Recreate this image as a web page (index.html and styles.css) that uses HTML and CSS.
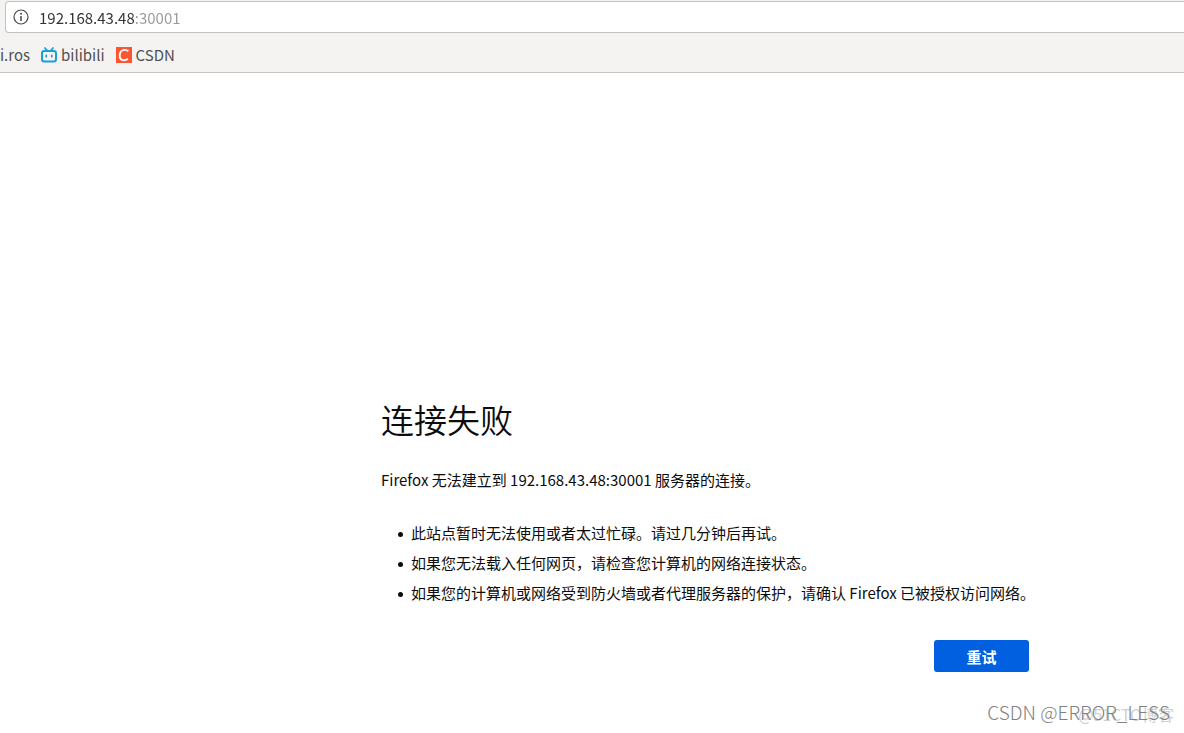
FILE: index.html
```html
<!DOCTYPE html>
<html lang="zh-CN">
<head>
<meta charset="utf-8">
<title>连接失败</title>
<link rel="stylesheet" href="styles.css">
</head>
<body>
<header class="toolbar">
  <div class="urlbar">
    <svg class="info-icon" viewBox="0 0 16 16" aria-hidden="true">
      <circle cx="8" cy="8" r="7" fill="none" stroke="#4a4a4a" stroke-width="1.2"/>
      <circle cx="8" cy="4.8" r="1" fill="#4a4a4a"/>
      <path d="M8 7v5" stroke="#4a4a4a" stroke-width="1.5"/>
    </svg>
    <input class="address" type="text" value="192.168.43.48:30001" aria-label="地址" spellcheck="false">
  </div>
  <nav class="bookmarks">
    <a class="bookmark clipped" href="#"><span>ki.ros</span></a>
    <a class="bookmark" href="#">
      <svg class="site-icon" viewBox="0 0 16 16" aria-hidden="true">
        <path d="M4 1l2.200 2.600M12 1L9.800 3.600" stroke="#18a0d8" stroke-width="1.700" stroke-linecap="round"/>
        <rect x="1" y="4" width="14" height="10.500" rx="2.300" fill="none" stroke="#18a0d8" stroke-width="2"/>
        <path d="M5.200 8.300v1.400M10.800 8.300v1.400" stroke="#18a0d8" stroke-width="1.700" stroke-linecap="round"/>
      </svg>
      <span>bilibili</span>
    </a>
    <a class="bookmark" href="#">
      <svg class="site-icon" viewBox="0 0 16 16" aria-hidden="true">
        <rect width="16" height="16" fill="#fc5531"/>
        <path d="M12.300 4.200C11 3 9.700 2.800 8.500 2.900C5.600 3.100 3.900 5.200 3.700 8.200C3.500 11.500 5 13.200 7.700 13.200C9.300 13.200 10.700 12.700 11.900 11.700" fill="none" stroke="#fff" stroke-width="1.900"/>
      </svg>
      <span>CSDN</span>
    </a>
  </nav>
</header>
<main class="page">
  <section class="error">
    <h1 class="title">连接失败</h1>
    <p class="summary">Firefox 无法建立到 192.168.43.48:30001 服务器的连接。</p>
    <ul class="hints">
      <li>此站点暂时无法使用或者太过忙碌。请过几分钟后再试。</li>
      <li>如果您无法载入任何网页，请检查您计算机的网络连接状态。</li>
      <li>如果您的计算机或网络受到防火墙或者代理服务器的保护，请确认 Firefox 已被授权访问网络。</li>
    </ul>
    <button class="retry" type="button">重试</button>
  </section>
</main>
<div class="watermark site-mark">@51CTO博客</div>
<div class="watermark author-mark">CSDN @ERROR_LESS</div>
</body>
</html>
```
FILE: styles.css
```css
* {
  box-sizing: border-box;
}

body {
  margin: 0;
  min-height: 100vh;
  position: relative;
  background: #fff;
  color: #0c0c0d;
  font-family: "Noto Sans CJK SC", sans-serif;
  font-size: 15px;
}

.toolbar {
  background: #f4f3f2;
  border-bottom: 1px solid #c6c3c0;
  overflow: hidden;
}

.urlbar {
  display: flex;
  align-items: center;
  gap: 10px;
  height: 32px;
  margin: 1px 0 0 5px;
  padding-left: 7px;
  background: #fff;
  border: 1px solid #c3c1bf;
  border-right: 0;
  border-radius: 4px 0 0 4px;
}

.info-icon {
  width: 16px;
  height: 16px;
}

/* The host is dark and the port after it is grey. */
.address {
  flex: 1;
  min-width: 0;
  height: 30px;
  padding: 0;
  border: 0;
  outline: 0;
  background: linear-gradient(to right, #333 96px, #999 96px);
  -webkit-background-clip: text;
  background-clip: text;
  color: transparent;
  caret-color: #333;
  font: 15px "Noto Sans CJK SC", sans-serif;
}

.bookmarks {
  display: flex;
  align-items: center;
  gap: 11px;
  height: 39px;
  padding-top: 5px;
  line-height: 20px;
}

.bookmark {
  display: flex;
  align-items: center;
  gap: 4px;
  color: #505050;
  text-decoration: none;
}

.clipped {
  width: 30px;
  justify-content: flex-end;
}

.site-icon {
  width: 16px;
  height: 16px;
}

.page {
  display: flex;
  justify-content: flex-end;
  padding: 322px 155px 48px 24px;
}

.error {
  display: flex;
  flex-direction: column;
  width: 100%;
  max-width: 648px;
}

.title {
  margin: 0;
  font-size: 33px;
  font-weight: 350;
  line-height: 48px;
}

.summary {
  margin: 22px 0 0;
  line-height: 30px;
}

.hints {
  margin: 23px -8px 0 0;
  padding-left: 30px;
  line-height: 30px;
  list-style: none;
}

.hints li::before {
  content: "";
  float: left;
  width: 5px;
  height: 5px;
  margin: 14px 0 0 -13px;
  border-radius: 50%;
  background: #0c0c0d;
}

.retry {
  align-self: flex-end;
  width: 95px;
  height: 32px;
  margin-top: 32px;
  padding: 0;
  border: 0;
  border-radius: 3px;
  background: #0060df;
  color: #fff;
  font: bold 15px "Noto Sans CJK SC", sans-serif;
}

.watermark {
  position: absolute;
  line-height: 24px;
  white-space: nowrap;
}

.site-mark {
  right: 10px;
  bottom: 7px;
  color: #d0d0d0;
  font-size: 16px;
}

.author-mark {
  right: 14px;
  bottom: 9px;
  color: #808080;
  font-size: 19px;
  font-weight: 300;
}
```
